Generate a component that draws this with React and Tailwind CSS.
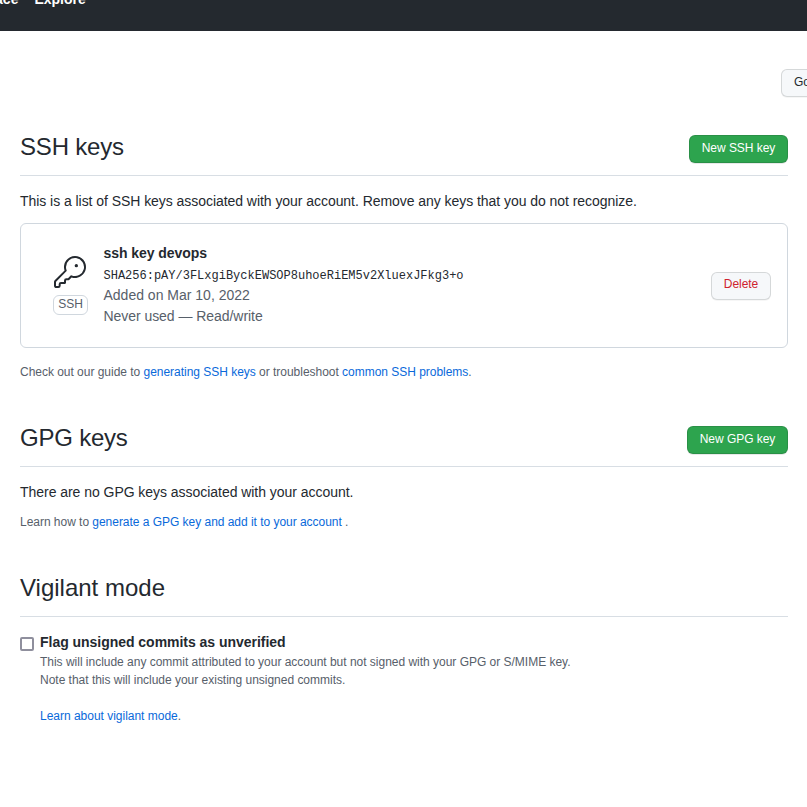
const Heading = ({ children, action, tracking }) => (
  <div className="flex h-[41px] items-start justify-between border-b border-[#d8dee4]">
    <h2 className={`text-[24px] leading-6 text-[#24292f] ${tracking || ""}`}>{children}</h2>
    {action}
  </div>
);

const Primary = ({ children, width }) => (
  <button
    className={`h-7 ${width} rounded-md border border-[rgba(27,31,36,0.15)] bg-[#2da44e] pb-0.5 text-center text-[12px] leading-5 font-medium tracking-[-0.04px] text-white shadow-[0_1px_0_rgba(27,31,36,0.1)]`}
  >
    {children}
  </button>
);

const Link = ({ children }) => <a className="text-[#0969da]">{children}</a>;

export default function App() {
  return (
    <div className="h-[807px] w-[807px] overflow-hidden bg-white font-['Liberation_Sans',Arial,sans-serif] text-[14px] leading-[21px] text-[#24292f]">
      <header className="flex h-[31px] gap-4 bg-[#24292f] font-bold text-white">
        <span className="-mt-[11px] -ml-[62.5px]">Marketplace</span>
        <span className="-mt-[11px]">Explore</span>
      </header>
      <div className="flex h-[104px] pt-[38px] pl-[781px]">
        <button className="h-7 shrink-0 rounded-md border border-[rgba(27,31,36,0.15)] bg-[#f6f8fa] px-3 pb-0.5 text-[12px] leading-5 whitespace-nowrap shadow-[0_1px_0_rgba(27,31,36,0.04)]">
          Go to your personal profile
        </button>
      </div>
      <main className="mx-5 w-[768px]">
        <section className="h-[291px]">
          <Heading tracking="tracking-[-0.18px]" action={<Primary width="w-[99px]">New SSH key</Primary>}>
            SSH keys
          </Heading>
          <p className="mt-[15px] tracking-[-0.05px]">
            This is a list of SSH keys associated with your account. Remove any keys that you do not recognize.
          </p>
          <div className="mt-[11px] flex h-[125px] items-center rounded-md border border-[#d0d7de] pr-4 pl-8">
            <div className="flex w-[35px] flex-col items-center">
              <svg className="mr-px" width="32" height="32" viewBox="0 0 24 24" fill="#24292f">
                <path d="M16.75 8.5a1.25 1.25 0 100-2.5 1.25 1.25 0 000 2.5z" />
                <path
                  fillRule="evenodd"
                  d="M15.75 0a8.25 8.25 0 00-7.851 10.79L.513 18.178A1.75 1.75 0 000 19.414v2.836C0 23.217.784 24 1.75 24h1.5A1.75 1.75 0 005 22.25v-1a.25.25 0 01.25-.25h2.735a.75.75 0 00.545-.22l.214-.213A.875.875 0 009 19.948V18.5a.25.25 0 01.25-.25h1.086c.464 0 .91-.184 1.237-.513l1.636-1.636A8.25 8.25 0 1015.75 0zM9 8.25a6.75 6.75 0 114.288 6.287.75.75 0 00-.804.168l-1.971 1.972a.25.25 0 01-.177.073H9.25A1.75 1.75 0 007.5 18.5v1H5.25a1.75 1.75 0 00-1.75 1.75v1a.25.25 0 01-.25.25h-1.5a.25.25 0 01-.25-.25v-2.836a.25.25 0 01.073-.177l7.722-7.721a.75.75 0 00.168-.804A6.73 6.73 0 019 8.25z"
                />
              </svg>
              <span className="mt-[7px] flex h-5 w-[35px] items-center justify-center rounded-md border border-[#d0d7de] pb-0.5 text-[12px] text-[#57606a]">
                SSH
              </span>
            </div>
            <div className="ml-[15.5px] flex-1 pb-[2px] text-[#57606a]">
              <div className="font-bold tracking-[-0.05px] text-[#24292f]">ssh key devops</div>
              <div className="pt-[3px] font-['Liberation_Mono',monospace] text-[12px] leading-[18px] text-[#24292f]">
                SHA256:pAY/3FLxgiByckEWSOP8uhoeRiEM5v2XluexJFkg3+o
              </div>
              <div>Added on Mar 10, 2022</div>
              <div className="tracking-[-0.05px]">Never used — Read/write</div>
            </div>
            <button className="h-7 w-[60px] rounded-md border border-[rgba(27,31,36,0.15)] bg-[#f6f8fa] pb-1 text-center text-[12px] leading-5 tracking-[-0.04px] text-[#cf222e] shadow-[0_1px_0_rgba(27,31,36,0.04)]">
              Delete
            </button>
          </div>
          <p className="mt-[15px] text-[12px] leading-[18px] tracking-[-0.025px] text-[#57606a]">
            Check out our guide to <Link>generating SSH keys</Link> or troubleshoot <Link>common SSH problems</Link>.
          </p>
        </section>
        <section className="h-[150px]">
          <Heading tracking="tracking-[-0.22px]" action={<Primary width="w-[101px]">New GPG key</Primary>}>
            GPG keys
          </Heading>
          <p className="mt-[15px] tracking-[-0.04px]">There are no GPG keys associated with your account.</p>
          <p className="mt-[10px] text-[12px] leading-[18px] tracking-[-0.03px] text-[#57606a]">
            Learn how to <Link>generate a GPG key and add it to your account</Link> .
          </p>
        </section>
        <section>
          <Heading>Vigilant mode</Heading>
          <div className="mt-[15px] flex">
            <input
              type="checkbox"
              className="mt-[5px] mr-[6px] h-[14px] w-[14px] shrink-0 appearance-none rounded-[2px] border-2 border-[#8f8f9d] bg-white"
            />
            <div className="text-[12px] leading-[18px] tracking-[-0.015px] text-[#57606a]">
              <div className="text-[14px] leading-[21px] font-bold tracking-[-0.03px] text-[#24292f]">
                Flag unsigned commits as unverified
              </div>
              <div>This will include any commit attributed to your account but not signed with your GPG or S/MIME key.</div>
              <div>Note that this will include your existing unsigned commits.</div>
              <div className="mt-[18px]">
                <Link>Learn about vigilant mode</Link>.
              </div>
            </div>
          </div>
        </section>
      </main>
    </div>
  );
}
